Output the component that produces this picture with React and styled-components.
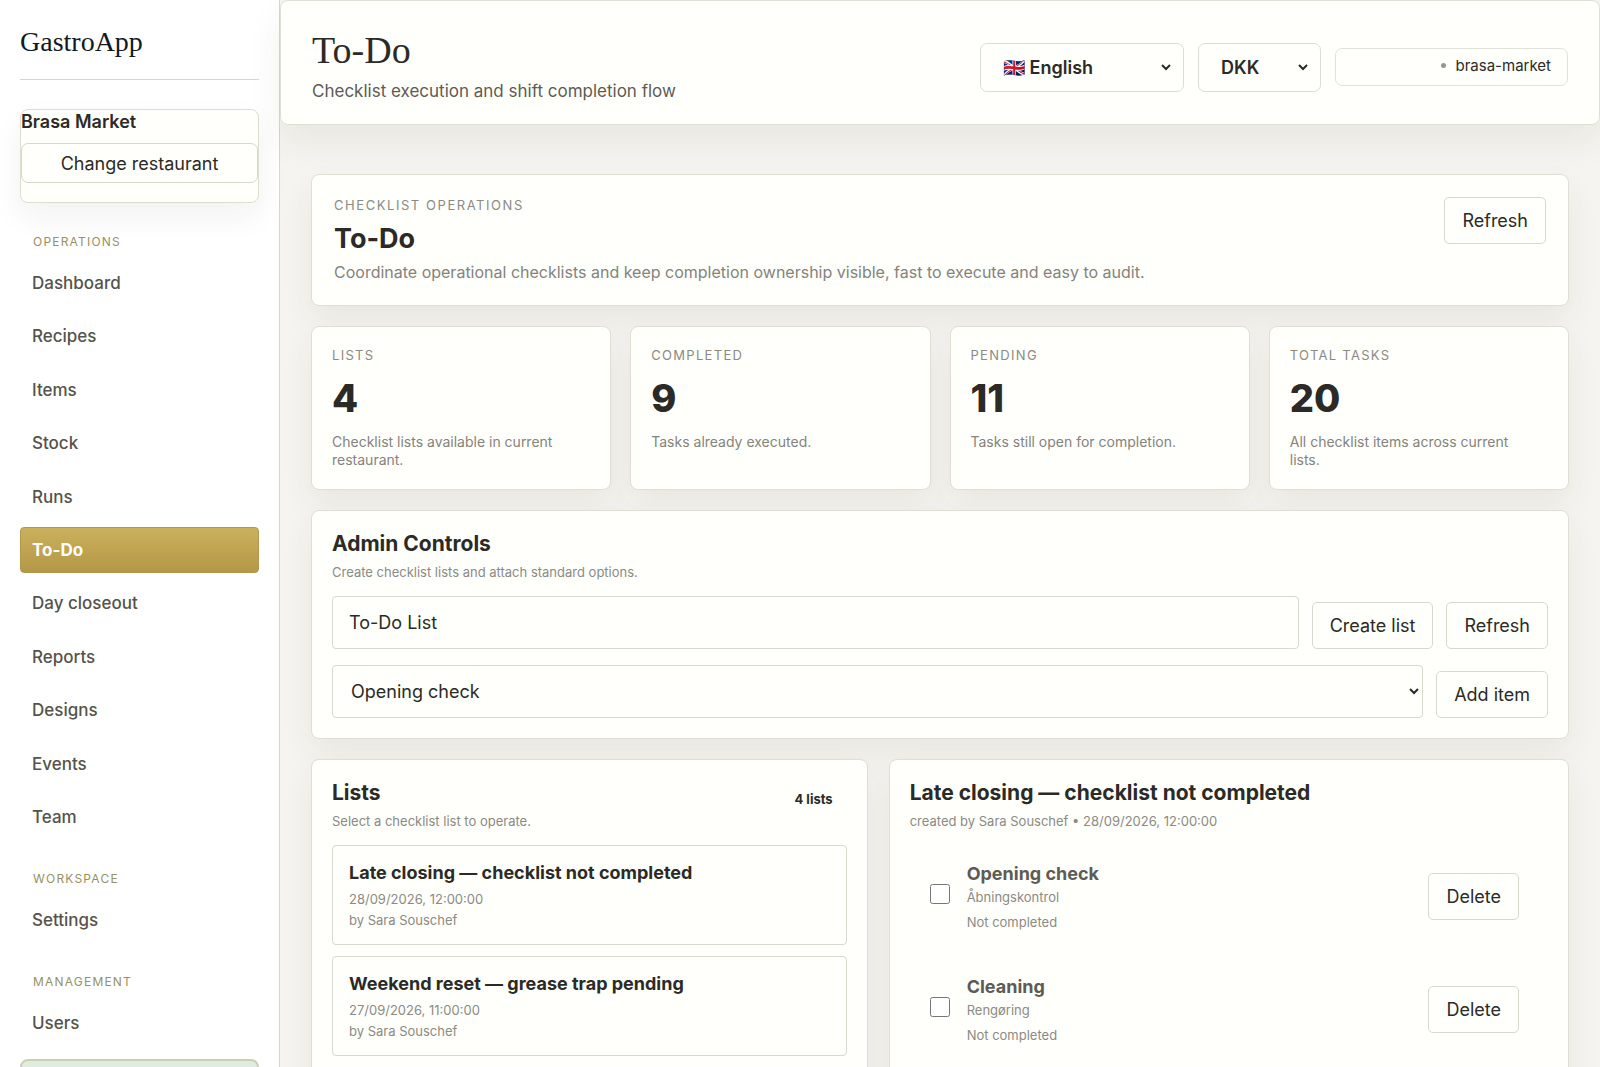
import { useState } from "react";
import styled, { createGlobalStyle } from "styled-components";

const GlobalStyle = createGlobalStyle`
  * {
    box-sizing: border-box;
  }
  body {
    margin: 0;
    background: #f5f4f0;
    color: #2b2a26;
    font-family: Inter, "Liberation Sans", sans-serif;
    font-size: 18px;
  }
  h1, h2, h3, p, ul {
    margin: 0;
    padding: 0;
  }
  button, input, select {
    font: inherit;
    color: inherit;
  }
`;

const Layout = styled.div`
  display: grid;
  grid-template-columns: 280px minmax(0, 1fr);
  min-height: 100vh;
`;

const Sidebar = styled.aside`
  padding: 20px 20px 28px;
  background: #ffffff;
  border-right: 1px solid #d9d8c8;
`;

const Logo = styled.p`
  padding: 4px 0 20px;
  border-bottom: 1px solid #d9d8c8;
  color: #0f1a24;
  font-family: "Liberation Serif", serif;
  font-size: 28px;
  line-height: 35px;
`;

const Restaurant = styled.section`
  margin-top: 29px;
  padding-bottom: 19px;
  background: #fffffb;
  border: 1px solid #dfddd0;
  border-radius: 8px;
  box-shadow: 0 14px 32px rgba(40, 40, 60, 0.06);
`;

const RestaurantName = styled.h2`
  padding-bottom: 9px;
  font-size: 18px;
  font-weight: 600;
  line-height: 24px;
`;

const Button = styled.button`
  height: 47px;
  padding: 0 17px;
  flex-shrink: 0;
  background: #fffffb;
  border: 1px solid #d9d8cf;
  border-radius: 5px;
  cursor: pointer;
`;

const WideButton = styled(Button)`
  display: block;
  width: 100%;
  height: 40px;
  border-radius: 7px;
`;

const NavGroup = styled.nav`
  padding-top: 31px;
`;

const NavLabel = styled.h3`
  padding-left: 13px;
  color: #97905f;
  font-size: 12px;
  font-weight: 400;
  letter-spacing: 0.1em;
  line-height: 16px;
`;

const NavList = styled.ul`
  display: flex;
  flex-direction: column;
  justify-content: space-between;
  min-height: ${(props) => (props.$long ? "580px" : "46px")};
  margin-top: 10px;
  list-style: none;
`;

const NavLink = styled.a`
  display: flex;
  align-items: center;
  height: 46px;
  padding: 0 11px;
  background: ${(props) =>
    props.$active ? "linear-gradient(#cbb05c, #b59748)" : "none"};
  border: 1px solid ${(props) => (props.$active ? "#b3974c" : "transparent")};
  border-radius: 4px;
  color: ${(props) => (props.$active ? "#fffffb" : "#55534b")};
  font-size: 17px;
  font-weight: ${(props) => (props.$active ? 700 : 500)};
  text-decoration: none;
`;

const StatusBox = styled.div`
  height: 60px;
  margin-top: 13px;
  background: #e0ebe1;
  border: 2px solid #cdcfaf;
  border-radius: 8px;
`;

const Header = styled.header`
  display: flex;
  justify-content: space-between;
  align-items: center;
  height: 125px;
  padding: 0 31px;
  background: #fffffb;
  border: 1px solid #e0dfd6;
  border-radius: 8px;
  box-shadow: 0 16px 36px rgba(60, 55, 20, 0.07);
`;

const PageTitle = styled.h1`
  padding-top: 6px;
  font-family: "Liberation Serif", serif;
  font-size: 38px;
  font-weight: 400;
  line-height: 44px;
`;

const PageSubtitle = styled.p`
  padding-top: 7px;
  color: #5d5b54;
  font-size: 17px;
  line-height: 24px;
`;

const HeaderTools = styled.div`
  display: flex;
  align-items: center;
  gap: 14px;
  padding-top: 9px;
`;

const SelectShell = styled.label`
  display: flex;
  width: ${(props) => (props.$wide ? "204px" : "123px")};
  height: 49px;
  padding: 0 9px;
  background: #fffffb;
  border: 1px solid #deddd5;
  border-radius: 7px;
`;

const ToolSelect = styled.select`
  width: 100%;
  padding: 0 9px;
  background: none;
  border: none;
  font-weight: 600;
`;

const Tenant = styled.div`
  display: flex;
  justify-content: flex-end;
  align-items: center;
  gap: 10px;
  width: 233px;
  height: 38px;
  padding: 0 16px 3px;
  border: 1px solid #e3e2da;
  border-radius: 7px;
  font-size: 15px;
`;

const Dot = styled.span`
  width: 5px;
  height: 5px;
  background: #96958e;
  border-radius: 50%;
`;

const Content = styled.main`
  display: flex;
  flex-direction: column;
  gap: 20px;
  padding: 49px 31px 32px;
`;

const Card = styled.section`
  padding: 20px;
  background: #fffffb;
  border: 1px solid #e0dfd6;
  border-radius: 8px;
  box-shadow: 0 14px 32px rgba(60, 55, 20, 0.07);
`;

const Hero = styled(Card)`
  display: flex;
  justify-content: space-between;
  align-items: flex-start;
  padding: 22px;
`;

const Eyebrow = styled.p`
  color: #8b8a83;
  font-size: 13px;
  letter-spacing: ${(props) => (props.$wide ? "0.12em" : "0.1em")};
  line-height: 16px;
`;

const HeroTitle = styled.h2`
  padding-top: 9px;
  font-size: 27px;
  font-weight: 700;
  line-height: 34px;
`;

const HeroText = styled.p`
  padding: 6px 0 1px;
  color: #84837c;
  font-size: 16px;
  line-height: 20px;
`;

const Stats = styled.div`
  display: grid;
  grid-template-columns: repeat(4, minmax(0, 1fr));
  gap: 19px;
`;

const StatValue = styled.p`
  padding: 13px 0;
  font-size: 38px;
  font-weight: 800;
  line-height: 44px;
`;

const StatText = styled.p`
  min-height: 36px;
  padding-right: 12px;
  color: #84837c;
  font-size: 14px;
  line-height: 18px;
`;

const PanelTitle = styled.h2`
  font-size: 21px;
  font-weight: 700;
  line-height: 26px;
`;

const Note = styled.p`
  color: #8b8a83;
  font-size: 13px;
  line-height: ${(props) => (props.$loose ? "28px" : "21px")};
`;

const PanelHead = styled.div`
  display: flex;
  justify-content: space-between;
  align-items: flex-start;
  padding-bottom: 13px;

  ${Note} {
    padding-top: 5px;
  }
`;

const FormRow = styled.form`
  display: flex;
  align-items: flex-end;
  gap: 13px;

  & + & {
    margin-top: 16px;
  }
`;

const TextInput = styled.input`
  flex: 1;
  min-width: 0;
  height: 53px;
  padding: 0 16px;
  background: #fffffb;
  border: 1px solid #d9d8cf;
  border-radius: 4px;
`;

const ItemSelect = styled.select`
  flex: 1;
  min-width: 0;
  height: 53px;
  padding: 0 14px;
  background: #fffffb;
  border: 1px solid #d9d8cf;
  border-radius: 4px;
`;

const Columns = styled.div`
  display: grid;
  grid-template-columns: minmax(0, 9fr) minmax(0, 11fr);
  gap: 21px;
`;

const Count = styled.span`
  padding: 10px 14px;
  font-size: 13px;
  font-weight: 700;
  line-height: 18px;
`;

const ItemName = styled.h3`
  color: ${(props) => (props.$muted ? "#5d5b54" : "inherit")};
  font-size: 18px;
  font-weight: 700;
  line-height: 26px;
`;

const ListStack = styled.div`
  display: flex;
  flex-direction: column;
  gap: 11px;
`;

const ListCard = styled.button`
  height: 100px;
  padding: 0 16px;
  background: #fffffb;
  border: 1px solid #d9d8cf;
  border-radius: 4px;
  text-align: left;
  cursor: pointer;

  ${ItemName} {
    padding-bottom: 3px;
  }
`;

const TaskRow = styled.div`
  display: flex;
  justify-content: space-between;
  align-items: center;
  height: 113px;
  padding: 0 29px 11px 20px;
`;

const TaskLabel = styled.label`
  display: flex;
  align-items: flex-start;
  gap: 17px;
`;

const TaskText = styled.div`
  padding-top: 4px;
`;

const Checkbox = styled.input`
  width: 20px;
  height: 20px;
  margin: 27px 0 0;
`;

const operations = [
  "Dashboard",
  "Recipes",
  "Items",
  "Stock",
  "Runs",
  "To-Do",
  "Day closeout",
  "Reports",
  "Designs",
  "Events",
  "Team",
];

const stats = [
  {
    label: "LISTS",
    value: 4,
    text: "Checklist lists available in current restaurant.",
  },
  { label: "COMPLETED", value: 9, text: "Tasks already executed." },
  { label: "PENDING", value: 11, text: "Tasks still open for completion." },
  {
    label: "TOTAL TASKS",
    value: 20,
    text: "All checklist items across current lists.",
  },
];

const lists = [
  {
    title: "Late closing — checklist not completed",
    date: "28/09/2026, 12:00:00",
    author: "Sara Souschef",
  },
  {
    title: "Weekend reset — grease trap pending",
    date: "27/09/2026, 11:00:00",
    author: "Sara Souschef",
  },
];

const tasks = [
  { name: "Opening check", local: "Åbningskontrol" },
  { name: "Cleaning", local: "Rengøring" },
];

function NavSection({ label, items }) {
  return (
    <NavGroup aria-label={label}>
      <NavLabel>{label}</NavLabel>
      <NavList $long={items.length > 1}>
        {items.map((item) => (
          <li key={item}>
            <NavLink href="#" $active={item === "To-Do"}>
              {item}
            </NavLink>
          </li>
        ))}
      </NavList>
    </NavGroup>
  );
}

function Task({ name, local }) {
  const [done, setDone] = useState(false);

  return (
    <TaskRow>
      <TaskLabel>
        <Checkbox
          type="checkbox"
          checked={done}
          onChange={(e) => setDone(e.target.checked)}
        />
        <TaskText>
          <ItemName as="div" $muted>
            {name}
          </ItemName>
          <Note as="div">{local}</Note>
          <Note as="div" $loose>
            {done ? "Completed" : "Not completed"}
          </Note>
        </TaskText>
      </TaskLabel>
      <Button>Delete</Button>
    </TaskRow>
  );
}

export default function App() {
  const [listName, setListName] = useState("To-Do List");

  return (
    <>
      <GlobalStyle />
      <Layout>
        <Sidebar>
          <Logo>GastroApp</Logo>
          <Restaurant>
            <RestaurantName>Brasa Market</RestaurantName>
            <WideButton>Change restaurant</WideButton>
          </Restaurant>
          <NavSection label="OPERATIONS" items={operations} />
          <NavSection label="WORKSPACE" items={["Settings"]} />
          <NavSection label="MANAGEMENT" items={["Users"]} />
          <StatusBox />
        </Sidebar>
        <div>
          <Header>
            <div>
              <PageTitle>To-Do</PageTitle>
              <PageSubtitle>
                Checklist execution and shift completion flow
              </PageSubtitle>
            </div>
            <HeaderTools>
              <SelectShell $wide>
                <ToolSelect aria-label="Language">
                  <option>🇬🇧 English</option>
                </ToolSelect>
              </SelectShell>
              <SelectShell>
                <ToolSelect aria-label="Currency">
                  <option>DKK</option>
                </ToolSelect>
              </SelectShell>
              <Tenant>
                <Dot />
                brasa-market
              </Tenant>
            </HeaderTools>
          </Header>
          <Content>
            <Hero>
              <div>
                <Eyebrow $wide>CHECKLIST OPERATIONS</Eyebrow>
                <HeroTitle>To-Do</HeroTitle>
                <HeroText>
                  Coordinate operational checklists and keep completion
                  ownership visible, fast to execute and easy to audit.
                </HeroText>
              </div>
              <Button>Refresh</Button>
            </Hero>
            <Stats>
              {stats.map((stat) => (
                <Card key={stat.label}>
                  <Eyebrow>{stat.label}</Eyebrow>
                  <StatValue>{stat.value}</StatValue>
                  <StatText>{stat.text}</StatText>
                </Card>
              ))}
            </Stats>
            <Card>
              <PanelHead>
                <div>
                  <PanelTitle>Admin Controls</PanelTitle>
                  <Note>Create checklist lists and attach standard options.</Note>
                </div>
              </PanelHead>
              <FormRow onSubmit={(e) => e.preventDefault()}>
                <TextInput
                  aria-label="List name"
                  value={listName}
                  onChange={(e) => setListName(e.target.value)}
                />
                <Button>Create list</Button>
                <Button type="button">Refresh</Button>
              </FormRow>
              <FormRow onSubmit={(e) => e.preventDefault()}>
                <ItemSelect aria-label="Standard option">
                  <option>Opening check</option>
                  <option>Cleaning</option>
                </ItemSelect>
                <Button>Add item</Button>
              </FormRow>
            </Card>
            <Columns>
              <Card>
                <PanelHead>
                  <div>
                    <PanelTitle>Lists</PanelTitle>
                    <Note>Select a checklist list to operate.</Note>
                  </div>
                  <Count>4 lists</Count>
                </PanelHead>
                <ListStack>
                  {lists.map((list) => (
                    <ListCard key={list.title}>
                      <ItemName as="div">{list.title}</ItemName>
                      <Note as="div">{list.date}</Note>
                      <Note as="div">by {list.author}</Note>
                    </ListCard>
                  ))}
                </ListStack>
              </Card>
              <Card>
                <PanelHead>
                  <div>
                    <PanelTitle>{lists[0].title}</PanelTitle>
                    <Note>
                      created by {lists[0].author} • {lists[0].date}
                    </Note>
                  </div>
                </PanelHead>
                {tasks.map((task) => (
                  <Task key={task.name} {...task} />
                ))}
              </Card>
            </Columns>
          </Content>
        </div>
      </Layout>
    </>
  );
}
